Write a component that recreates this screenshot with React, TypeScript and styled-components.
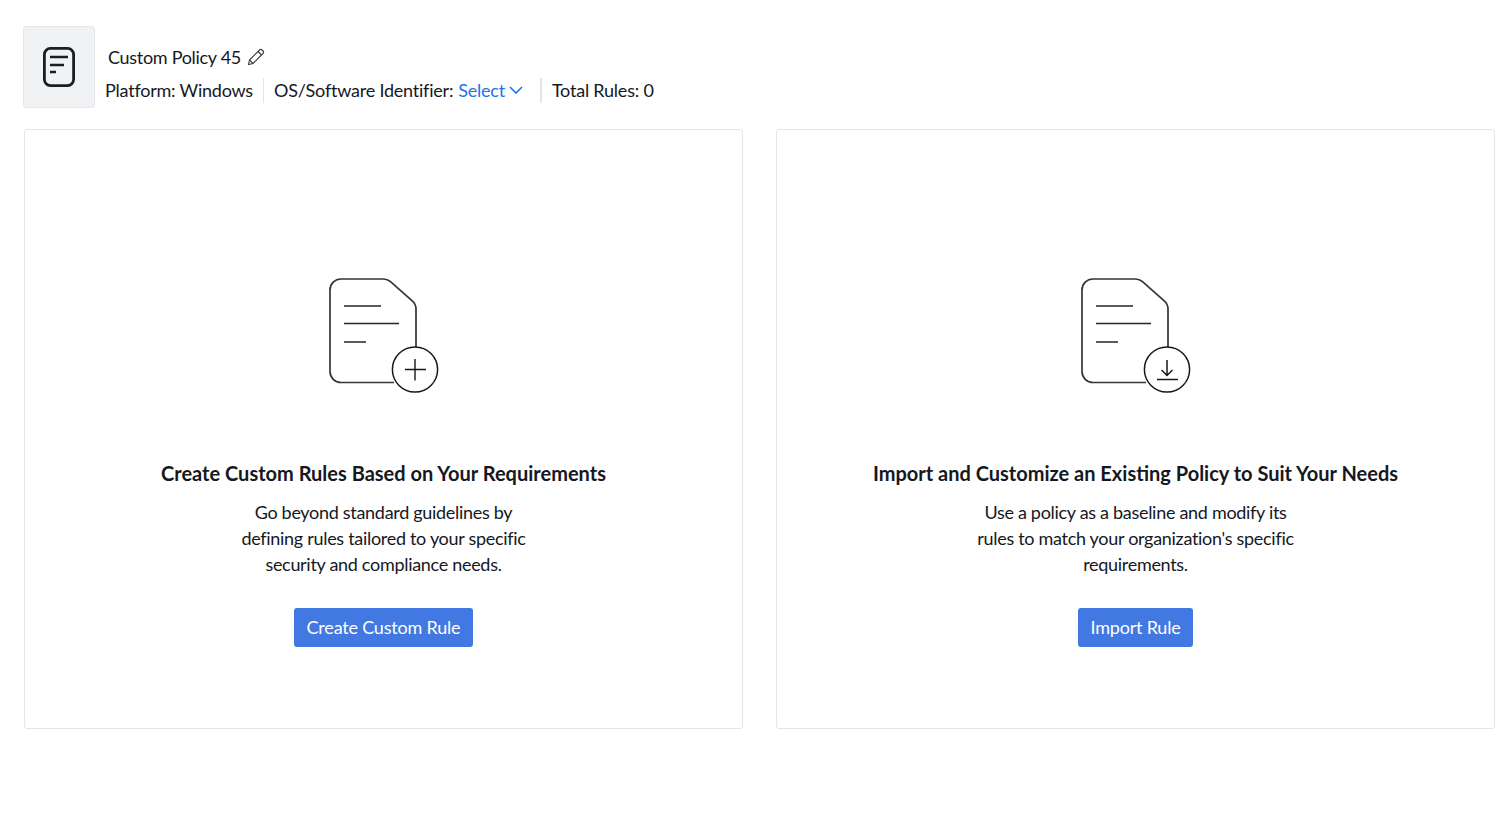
import styled, { createGlobalStyle } from "styled-components";

const GlobalStyle = createGlobalStyle`
  html, body {
    margin: 0;
    background: #fff;
    font-family: "Lato", "Liberation Sans", sans-serif;
    color: #15181e;
  }
`;

const Page = styled.div`
  padding: 26px 17px 0 24px;
`;

const Header = styled.header`
  display: flex;
  align-items: stretch;
  gap: 10px;
  margin-left: -1px;
`;

const IconBox = styled.div`
  width: 72px;
  height: 82px;
  box-sizing: border-box;
  display: flex;
  align-items: center;
  justify-content: center;
  background: #f1f2f4;
  border: 1px solid #e6e7ec;
  border-radius: 3px;
`;

const HeaderInfo = styled.div`
  display: flex;
  flex-direction: column;
  padding-top: 18px;
`;

const TitleRow = styled.div`
  display: flex;
  align-items: center;
  gap: 6px;
  height: 25px;
  margin-left: 3px;
  font-size: 18px;
  letter-spacing: -0.3px;
`;

const MetaRow = styled.div`
  display: flex;
  align-items: center;
  height: 26px;
  margin-top: 8px;
  font-size: 18px;
  letter-spacing: -0.22px;
`;

const MetaItem = styled.div<{ $divider?: number }>`
  display: flex;
  align-items: center;
  height: 25px;
  padding: 0 10px;
  border-right: ${(p) => (p.$divider ? `${p.$divider}px solid #e3e4ea` : "none")};

  &:first-child {
    padding-left: 0;
  }
`;

const SelectLink = styled.span`
  display: inline-flex;
  align-items: center;
  gap: 4px;
  margin-left: 5px;
  margin-right: 7px;
  color: #1a73f0;
`;

const Cards = styled.main`
  display: grid;
  grid-template-columns: 719px 719px;
  gap: 33px;
  margin-top: 21px;
`;

const Card = styled.section`
  height: 600px;
  box-sizing: border-box;
  padding-top: 135px;
  display: flex;
  flex-direction: column;
  align-items: center;
  border: 1px solid #e3e4e8;
  border-radius: 3px;
`;

const Illustration = styled.svg`
  display: block;
  width: 145px;
  height: 140px;
`;

const CardTitle = styled.h2`
  margin: 54px 0 0;
  font-size: 20px;
  line-height: 28px;
  font-weight: 700;
  color: #15181e;
`;

const CardText = styled.p`
  margin: 12px 0 0;
  font-size: 18px;
  line-height: 26px;
  letter-spacing: -0.3px;
  text-align: center;
  white-space: pre-line;
`;

const PrimaryButton = styled.button<{ $compact?: boolean }>`
  margin-top: 31px;
  height: 39px;
  padding: 0 ${(p) => (p.$compact ? "12px" : "13px")} 2px;
  border: none;
  border-radius: 3px;
  background: #4278e2;
  color: #fff;
  font-family: inherit;
  font-size: 18px;
  letter-spacing: -0.2px;
  cursor: pointer;
`;

const DocIcon = ({ kind }: { kind: "plus" | "download" }) => (
  <Illustration viewBox="1 0 145 140" fill="none" stroke="#33353b">
    <path
      d="M84 117.500H31a11 11 0 0 1-11-11V25a11 11 0 0 1 11-11h42.500a11 11 0 0 1 7 2.700l22 19.500a11 11 0 0 1 3.500 8V82"
      strokeWidth="1.700"
    />
    <path d="M34 41h37M34 58.500h55M34 77h22" stroke="#24262b" strokeWidth="1.700" />
    <circle cx="105" cy="104.500" r="22.600" stroke="#15181e" strokeWidth="1.500" fill="#fff" />
    {kind === "plus" ? (
      <path d="M105 94v21.500M95 104.500h21" stroke="#15181e" strokeWidth="1.400" />
    ) : (
      <path
        d="M105 95v15M99.500 105l5.500 5.500 5.500-5.500M95 114.500h21"
        stroke="#15181e"
        strokeWidth="1.500"
      />
    )}
  </Illustration>
);

const App = () => {
  return (
    <Page>
      <GlobalStyle />
      <Header>
        <IconBox>
          <svg width="36" height="42" viewBox="0 0 36 42" fill="none" stroke="#1c1e23">
            <rect x="3.400" y="2.400" width="29.200" height="37.200" rx="6" strokeWidth="2.800" />
            <path d="M9 11h18M9 19h14M9 26h6" strokeWidth="2.400" />
          </svg>
        </IconBox>
        <HeaderInfo>
          <TitleRow>
            Custom Policy 45
            <svg width="18" height="18" viewBox="0 0 18 18" fill="none" stroke="#3a3d44" strokeWidth="1.100">
              <path d="M1.500 16.500l1-4.500L12.500 2a1.800 1.800 0 0 1 2.500 0l1 1a1.800 1.800 0 0 1 0 2.500L6 15.500z" />
              <path d="M11 3.500l3.500 3.500M2.500 12l3.500 3.500" />
            </svg>
          </TitleRow>
          <MetaRow>
            <MetaItem $divider={1}>Platform: Windows</MetaItem>
            <MetaItem $divider={2}>
              OS/Software Identifier:
              <SelectLink>
                Select
                <svg width="14" height="8" viewBox="0 0 14 8" fill="none" stroke="#1a73f0" strokeWidth="1.600">
                  <path d="M1 1l6 6 6-6" />
                </svg>
              </SelectLink>
            </MetaItem>
            <MetaItem>Total Rules: 0</MetaItem>
          </MetaRow>
        </HeaderInfo>
      </Header>
      <Cards>
        <Card>
          <DocIcon kind="plus" />
          <CardTitle>Create Custom Rules Based on Your Requirements</CardTitle>
          <CardText>
            {"Go beyond standard guidelines by\ndefining rules tailored to your specific\nsecurity and compliance needs."}
          </CardText>
          <PrimaryButton>Create Custom Rule</PrimaryButton>
        </Card>
        <Card>
          <DocIcon kind="download" />
          <CardTitle>Import and Customize an Existing Policy to Suit Your Needs</CardTitle>
          <CardText>
            {"Use a policy as a baseline and modify its\nrules to match your organization's specific\nrequirements."}
          </CardText>
          <PrimaryButton $compact>Import Rule</PrimaryButton>
        </Card>
      </Cards>
    </Page>
  );
};

export default App;
